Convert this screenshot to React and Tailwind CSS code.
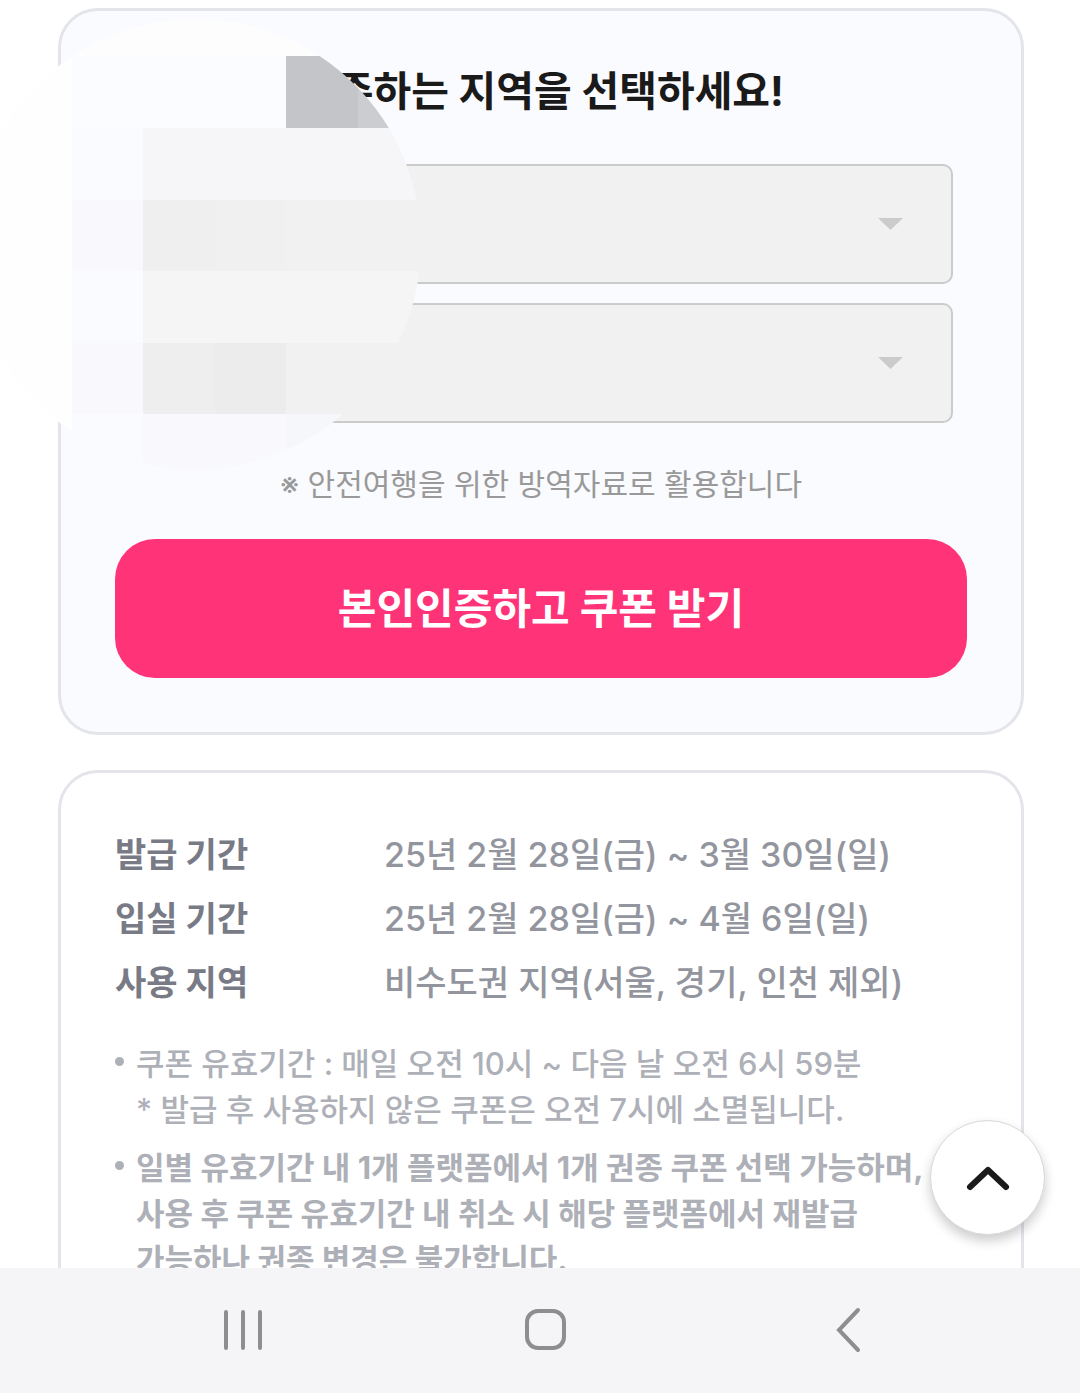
import React from 'react';

const periods = [
  { label: '발급 기간', value: '25년 2월 28일(금) ~ 3월 30일(일)' },
  { label: '입실 기간', value: '25년 2월 28일(금) ~ 4월 6일(일)' },
  { label: '사용 지역', value: '비수도권 지역(서울, 경기, 인천 제외)' },
];

const notices = [
  {
    bold: false,
    lines: [
      '쿠폰 유효기간 : 매일 오전 10시 ~ 다음 날 오전 6시 59분',
      '* 발급 후 사용하지 않은 쿠폰은 오전 7시에 소멸됩니다.',
    ],
  },
  {
    bold: true,
    lines: [
      '일별 유효기간 내 1개 플랫폼에서 1개 권종 쿠폰 선택 가능하며,',
      '사용 후 쿠폰 유효기간 내 취소 시 해당 플랫폼에서 재발급',
      '가능하나 권종 변경은 불가합니다.',
    ],
  },
];

// x, y, width, height, fill
const mosaicTiles = [
  [0, 0, 421, 56, '#fdfdfe'],
  [0, 56, 72, 414, '#fefefe'],
  [72, 56, 214, 72, '#fbfcff'],
  [286, 56, 72, 72, '#c4c5c9'],
  [358, 56, 63, 72, '#cccdd1'],
  [72, 128, 71, 72, '#f9fbff'],
  [143, 128, 278, 72, '#f6f6f8'],
  [72, 200, 71, 71, '#f9f8fd'],
  [143, 200, 72, 71, '#efefef'],
  [215, 200, 71, 71, '#f0f0f0'],
  [286, 200, 135, 71, '#f1f1f1'],
  [72, 271, 71, 72, '#f9fbff'],
  [143, 271, 278, 72, '#f5f5f5'],
  [72, 343, 71, 71, '#f9f8fd'],
  [143, 343, 72, 71, '#eeeeee'],
  [215, 343, 71, 71, '#ececec'],
  [286, 343, 135, 71, '#f1f1f1'],
  [72, 414, 71, 56, '#fafbff'],
  [143, 414, 143, 56, '#f9f8fd'],
  [286, 414, 135, 56, '#f6f7fa'],
];

// Pixelated circle hiding the personal details
const Mosaic = () => (
  <svg
    className="absolute left-0 top-0 pointer-events-none"
    width="421"
    height="470"
    viewBox="0 0 421 470"
    shapeRendering="crispEdges"
    aria-hidden="true"
  >
    <clipPath id="mosaic-clip">
      <circle cx="196" cy="244" r="225" />
    </clipPath>
    <g clipPath="url(#mosaic-clip)">
      {mosaicTiles.map(([x, y, width, height, fill]) => (
        <rect key={`${x}-${y}`} x={x} y={y} width={width} height={height} fill={fill} />
      ))}
    </g>
  </svg>
);

const RegionSelect = ({ label }) => (
  <div className="relative">
    <select
      aria-label={label}
      disabled
      className="block w-full h-[120px] px-10 appearance-none rounded-[10px] border-2 border-[#cbcbcb] bg-[#f1f1f1] text-3xl text-[#999999] opacity-100"
    >
      <option value=""></option>
    </select>
    <svg
      className="absolute right-[50px] top-[54px] pointer-events-none"
      width="25"
      height="12"
      viewBox="0 0 25 12"
      aria-hidden="true"
    >
      <path d="M0 0h25L12.5 12z" fill="#cbcbcb" />
    </svg>
  </div>
);

const CouponCard = () => (
  <section className="rounded-[40px] border-3 border-[#e4e5eb] bg-[#fafbff] px-[54px] pt-[50px] pb-[54px] text-center">
    <h2 className="text-[41px] leading-[60px] font-bold text-[#1a1a1a] whitespace-nowrap">
      거주하는 지역을 선택하세요!
    </h2>
    <div className="mt-[43px] mx-[14px] flex flex-col gap-[19px]">
      <RegionSelect label="시/도" />
      <RegionSelect label="시/군/구" />
    </div>
    <p className="mt-[39px] text-[30px] leading-[44px] text-[#999999] whitespace-nowrap">
      ※ 안전여행을 위한 방역자료로 활용합니다
    </p>
    <button
      type="button"
      className="mt-[33px] w-full h-[139px] rounded-[40px] bg-[#ff3377] text-[42px] font-bold text-white"
    >
      본인인증하고 쿠폰 받기
    </button>
  </section>
);

const InfoCard = () => (
  <section className="rounded-[40px] border-3 border-[#e4e5eb] bg-white px-[54px] pt-[50px] pb-[54px] whitespace-nowrap">
    <dl className="text-[34px] leading-[64px]">
      {periods.map((period) => (
        <div key={period.label} className="flex">
          <dt className="w-[269px] shrink-0 font-bold text-[#787a86]">{period.label}</dt>
          <dd className="font-medium text-[#93959e]">{period.value}</dd>
        </div>
      ))}
    </dl>
    <ul className="mt-[26px] flex flex-col gap-3 text-[31px] leading-[46px] text-[#aeb0b8]">
      {notices.map((notice) => (
        <li key={notice.lines[0]} className="flex gap-3">
          <span className="mt-4 size-[9px] shrink-0 rounded-full bg-[#aeb0b8]" />
          <p className={notice.bold ? 'font-bold' : 'font-medium'}>
            {notice.lines.map((line) => (
              <span key={line} className="block">{line}</span>
            ))}
          </p>
        </li>
      ))}
    </ul>
  </section>
);

const NavigationBar = () => (
  <nav className="grid h-[125px] shrink-0 grid-cols-[1fr_auto_1fr] items-center bg-[#f5f5f8] px-[218px] pb-[2px] text-[#8e8e8e]">
    <button type="button" aria-label="최근 앱" className="justify-self-start">
      <svg width="50" height="50" viewBox="0 0 50 50" fill="none" stroke="currentColor" strokeWidth="4" strokeLinecap="round">
        <path d="M8 7v36M25 7v36M42 7v36" />
      </svg>
    </button>
    <button type="button" aria-label="홈">
      <svg width="60" height="50" viewBox="0 0 60 50" fill="none" stroke="currentColor" strokeWidth="4">
        <rect x="17" y="6" width="37" height="37" rx="11" />
      </svg>
    </button>
    <button type="button" aria-label="뒤로" className="justify-self-end">
      <svg width="50" height="50" viewBox="0 0 50 50" fill="none" stroke="currentColor" strokeWidth="4" strokeLinecap="round">
        <path d="M46 5L27 25l19 20" />
      </svg>
    </button>
  </nav>
);

const App = () => (
  <div className="flex h-screen flex-col bg-white font-['Inter','Noto_Sans_CJK_KR',sans-serif]">
    <main className="relative min-h-0 flex-1 overflow-hidden">
      <div className="flex flex-col gap-[35px] pt-2 pl-[58px] pr-14">
        <CouponCard />
        <InfoCard />
      </div>
      <Mosaic />
      <button
        type="button"
        aria-label="맨 위로"
        className="absolute right-[35px] bottom-[33px] flex size-[115px] items-center justify-center rounded-full border border-[#d8d8d8] bg-white shadow-[0_6px_12px_rgba(0,0,0,0.2)]"
      >
        <svg width="44" height="26" viewBox="0 0 44 26" fill="none" stroke="#1a1a1a" strokeWidth="6" strokeLinecap="round" strokeLinejoin="round">
          <path d="M4 22L22 5l18 17" />
        </svg>
      </button>
    </main>
    <NavigationBar />
  </div>
);

export default App;
